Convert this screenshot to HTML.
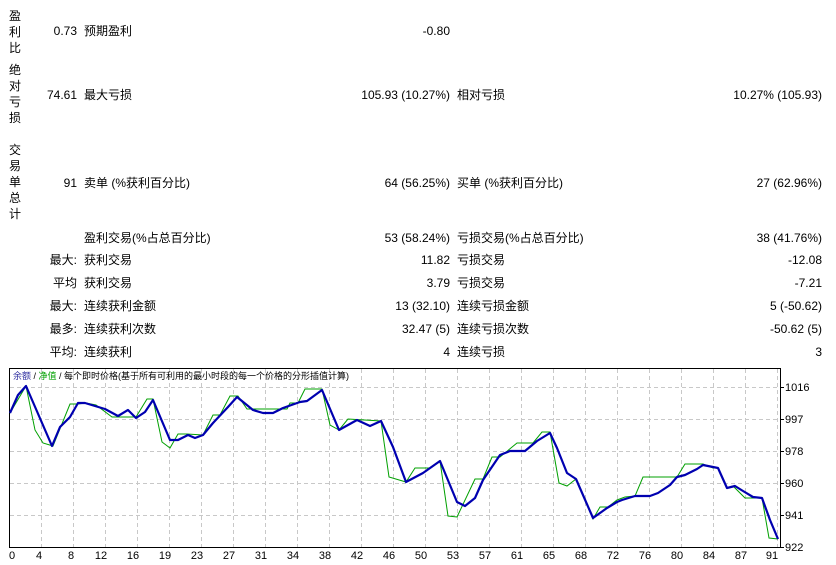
<!DOCTYPE html>
<html><head><meta charset="utf-8"><style>
html,body{margin:0;padding:0;background:#fff;width:836px;height:565px;overflow:hidden}
body{font-family:"Liberation Sans","Noto Sans CJK SC",sans-serif;font-size:12px;color:#000;position:relative}
.t{position:absolute;white-space:nowrap;line-height:14px}
.r{text-align:right}
.v{position:absolute;left:8px;width:14px;text-align:center;line-height:16px}
</style></head><body>
<div class="v" style="top:8px">盈<br>利<br>比</div>
<div class="v" style="top:62px">绝<br>对<br>亏<br>损</div>
<div class="v" style="top:142px">交<br>易<br>单<br>总<br>计</div>

<div class="t r" style="right:759px;top:24px">0.73</div><div class="t" style="left:84px;top:24px">预期盈利</div><div class="t r" style="right:386px;top:24px">-0.80</div>
<div class="t r" style="right:759px;top:88px">74.61</div><div class="t" style="left:84px;top:88px">最大亏损</div><div class="t r" style="right:386px;top:88px">105.93 (10.27%)</div><div class="t" style="left:457px;top:88px">相对亏损</div><div class="t r" style="right:14px;top:88px">10.27% (105.93)</div>
<div class="t r" style="right:759px;top:176px">91</div><div class="t" style="left:84px;top:176px">卖单 (%获利百分比)</div><div class="t r" style="right:386px;top:176px">64 (56.25%)</div><div class="t" style="left:457px;top:176px">买单 (%获利百分比)</div><div class="t r" style="right:14px;top:176px">27 (62.96%)</div>

<div class="t" style="left:84px;top:231px">盈利交易(%占总百分比)</div><div class="t r" style="right:386px;top:231px">53 (58.24%)</div><div class="t" style="left:457px;top:231px">亏损交易(%占总百分比)</div><div class="t r" style="right:14px;top:231px">38 (41.76%)</div>
<div class="t r" style="right:759px;top:253px">最大:</div><div class="t" style="left:84px;top:253px">获利交易</div><div class="t r" style="right:386px;top:253px">11.82</div><div class="t" style="left:457px;top:253px">亏损交易</div><div class="t r" style="right:14px;top:253px">-12.08</div>
<div class="t r" style="right:759px;top:276px">平均</div><div class="t" style="left:84px;top:276px">获利交易</div><div class="t r" style="right:386px;top:276px">3.79</div><div class="t" style="left:457px;top:276px">亏损交易</div><div class="t r" style="right:14px;top:276px">-7.21</div>
<div class="t r" style="right:759px;top:299px">最大:</div><div class="t" style="left:84px;top:299px">连续获利金额</div><div class="t r" style="right:386px;top:299px">13 (32.10)</div><div class="t" style="left:457px;top:299px">连续亏损金额</div><div class="t r" style="right:14px;top:299px">5 (-50.62)</div>
<div class="t r" style="right:759px;top:322px">最多:</div><div class="t" style="left:84px;top:322px">连续获利次数</div><div class="t r" style="right:386px;top:322px">32.47 (5)</div><div class="t" style="left:457px;top:322px">连续亏损次数</div><div class="t r" style="right:14px;top:322px">-50.62 (5)</div>
<div class="t r" style="right:759px;top:345px">平均:</div><div class="t" style="left:84px;top:345px">连续获利</div><div class="t r" style="right:386px;top:345px">4</div><div class="t" style="left:457px;top:345px">连续亏损</div><div class="t r" style="right:14px;top:345px">3</div>

<svg width="836" height="565" style="position:absolute;left:0;top:0" xmlns="http://www.w3.org/2000/svg">
<g stroke="#c8c8c8" stroke-dasharray="4,3" stroke-width="1">
<path d="M41.5 369V547M73.5 369V547M105.5 369V547M137.5 369V547M169.5 369V547M201.5 369V547M233.5 369V547M265.5 369V547M297.5 369V547M329.5 369V547M361.5 369V547M393.5 369V547M425.5 369V547M457.5 369V547M489.5 369V547M521.5 369V547M553.5 369V547M585.5 369V547M617.5 369V547M649.5 369V547M681.5 369V547M713.5 369V547M745.5 369V547M777.5 369V547"/>
<path d="M10 387.5H780M10 419.5H780M10 451.5H780M10 483.5H780M10 515.5H780"/>
</g>
<rect x="9.5" y="368.5" width="771" height="179" fill="none" stroke="#000"/>
<g stroke="#000"><path d="M780 387.5h4M780 419.5h4M780 451.5h4M780 483.5h4M780 515.5h4M780 547.5h4"/></g>
<polyline fill="none" stroke="#00a000" stroke-width="1" points="10,413 26,386 35,430 43,443 53,446 70,404 78,404 86,403 96,405 112,417 136,417 147,399 153,399 162,442 170,448 178,434 187,434 203,435 213,415 220,415 230,396 238,396 247,409 287,409 290,403 298,403 305,389 322,389 330,425 339,430 348,419 381,421 389,477 406,482 415,468 430,468 440,461 448,516 457,517 475,479 483,479 492,457 500,457 517,443 533,443 542,432 550,432 559,483 567,486 576,479 593,519 600,507 608,507 617,500 625,497 635,496 643,477 677,477 685,464 703,464 713,468 718,468 727,488 733,486 745,498 762,498 769,538 778,539"/>
<polyline fill="none" stroke="#0000b0" stroke-width="2.2" stroke-linejoin="round" points="10,413 18,395 26,386 52,446 60,427 70,417 78,403 85,403 105,409 118,416 128,410 136,418 145,412 153,400 170,440 178,440 188,435 195,438 203,435 213,423 228,407 237,397 253,410 263,413 273,413 283,408 300,402 307,401 322,390 339,430 357,420 370,426 381,421 393,447 406,482 423,473 440,461 457,502 465,506 475,498 483,480 500,455 510,451 525,451 537,441 550,433 557,448 567,473 576,479 593,518 607,508 617,502 622,500 635,496 650,496 658,493 670,485 677,477 685,475 697,469 703,465 708,466 718,468 727,488 735,486 743,491 753,497 762,498 770,520 778,539"/>
<g font-family="Liberation Sans, sans-serif" font-size="11" fill="#000">
<text x="785" y="391">1016</text><text x="785" y="423">997</text><text x="785" y="455">978</text><text x="785" y="487">960</text><text x="785" y="519">941</text><text x="785" y="551">922</text>
<g text-anchor="middle">
<text x="12" y="559">0</text><text x="39" y="559">4</text><text x="71" y="559">8</text><text x="101" y="559">12</text><text x="133" y="559">16</text><text x="165" y="559">19</text><text x="197" y="559">23</text><text x="229" y="559">27</text><text x="261" y="559">31</text><text x="293" y="559">34</text><text x="325" y="559">38</text><text x="357" y="559">42</text><text x="389" y="559">46</text><text x="421" y="559">50</text><text x="453" y="559">53</text><text x="485" y="559">57</text><text x="517" y="559">61</text><text x="549" y="559">65</text><text x="581" y="559">68</text><text x="613" y="559">72</text><text x="645" y="559">76</text><text x="677" y="559">80</text><text x="709" y="559">84</text><text x="741" y="559">87</text><text x="772" y="559">91</text>
</g></g>
<text x="13" y="379" font-size="9" font-family="Liberation Sans, Noto Sans CJK SC, sans-serif"><tspan fill="#3030a0">余额</tspan><tspan fill="#000"> / </tspan><tspan fill="#00a000">净值</tspan><tspan fill="#000"> / 每个即时价格(基于所有可利用的最小时段的每一个价格的分形插值计算)</tspan></text>
</svg>
</body></html>
